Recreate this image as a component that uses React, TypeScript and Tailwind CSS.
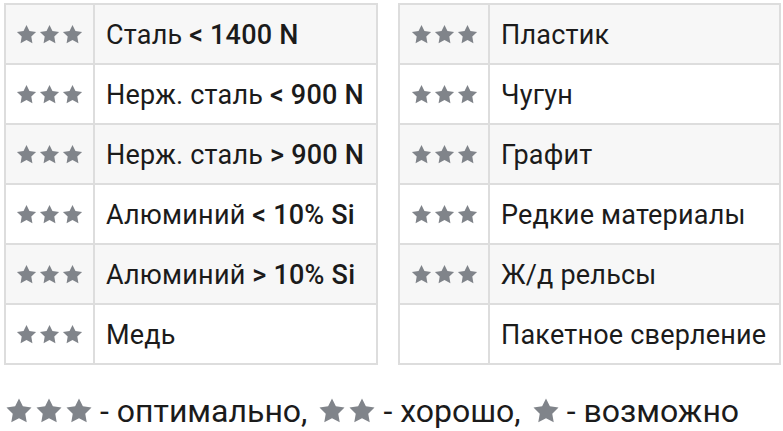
const Star = ({ size }: { size: number }) => (
  <svg width={size} height={size} viewBox="0 0 24 24" className="block shrink-0">
    <path
      d="M12 2l3.09 6.26L22 9.27l-5 4.87 1.18 6.88L12 17.77l-6.18 3.25L7 14.14 2 9.27l6.91-1.01L12 2z"
      fill="#80848a"
    />
  </svg>
);

const Stars = ({ count, size }: { count: number; size: number }) => (
  <span className="flex items-center">
    {Array.from({ length: count }).map((_, i) => (
      <Star key={i} size={size} />
    ))}
  </span>
);

interface Row {
  name: string;
  bold?: string;
  stars: number;
}

const leftRows: Row[] = [
  { name: 'Сталь', bold: '< 1400 N', stars: 3 },
  { name: 'Нерж. сталь', bold: '< 900 N', stars: 3 },
  { name: 'Нерж. сталь', bold: '> 900 N', stars: 3 },
  { name: 'Алюминий', bold: '< 10% Si', stars: 3 },
  { name: 'Алюминий', bold: '> 10% Si', stars: 3 },
  { name: 'Медь', stars: 3 },
];

const rightRows: Row[] = [
  { name: 'Пластик', stars: 3 },
  { name: 'Чугун', stars: 3 },
  { name: 'Графит', stars: 3 },
  { name: 'Редкие материалы', stars: 3 },
  { name: 'Ж/д рельсы', stars: 3 },
  { name: 'Пакетное сверление', stars: 0 },
];

const MaterialTable = ({ rows, width, starCol }: { rows: Row[]; width: string; starCol: string }) => (
  <div className={`${width} border-2 border-[#dddddd]`}>
    {rows.map((row, i) => (
      <div
        key={i}
        className={`flex ${i > 0 ? 'h-[60px] border-t-2 border-[#dddddd]' : 'h-[58px]'} ${
          i % 2 === 0 ? 'bg-[#f7f7f7]' : 'bg-white'
        }`}
      >
        <div className={`${starCol} flex items-center justify-center border-r-2 border-[#dddddd]`}>
          {row.stars > 0 && <Stars count={row.stars} size={23} />}
        </div>
        <div className="flex flex-1 items-center pl-[11px] pt-[2px] text-[27px] tracking-[0.2px] text-[#1b1b1b] whitespace-nowrap">
          <span>
            {row.name}
            {row.bold && (
              <>
                {' '}
                <span className="font-medium">{row.bold}</span>
              </>
            )}
          </span>
        </div>
      </div>
    ))}
  </div>
);

export default function App() {
  return (
    <div className="h-[431px] w-[783px] bg-white pl-[4px] pt-[3px] font-['Roboto',sans-serif]">
      <div className="flex gap-[20px]">
        <MaterialTable rows={leftRows} width="w-[374px]" starCol="w-[89px]" />
        <MaterialTable rows={rightRows} width="w-[383px]" starCol="w-[90px]" />
      </div>
      <div className="mt-[30px] flex items-center text-[32px] leading-none text-[#1b1b1b] whitespace-nowrap">
        <Stars count={3} size={30} />
        <span className="ml-[6px]">- оптимально,</span>
        <span className="ml-[10px]">
          <Stars count={2} size={30} />
        </span>
        <span className="ml-[6px]">- хорошо,</span>
        <span className="ml-[10px]">
          <Stars count={1} size={30} />
        </span>
        <span className="ml-[6px]">- возможно</span>
      </div>
    </div>
  );
}
